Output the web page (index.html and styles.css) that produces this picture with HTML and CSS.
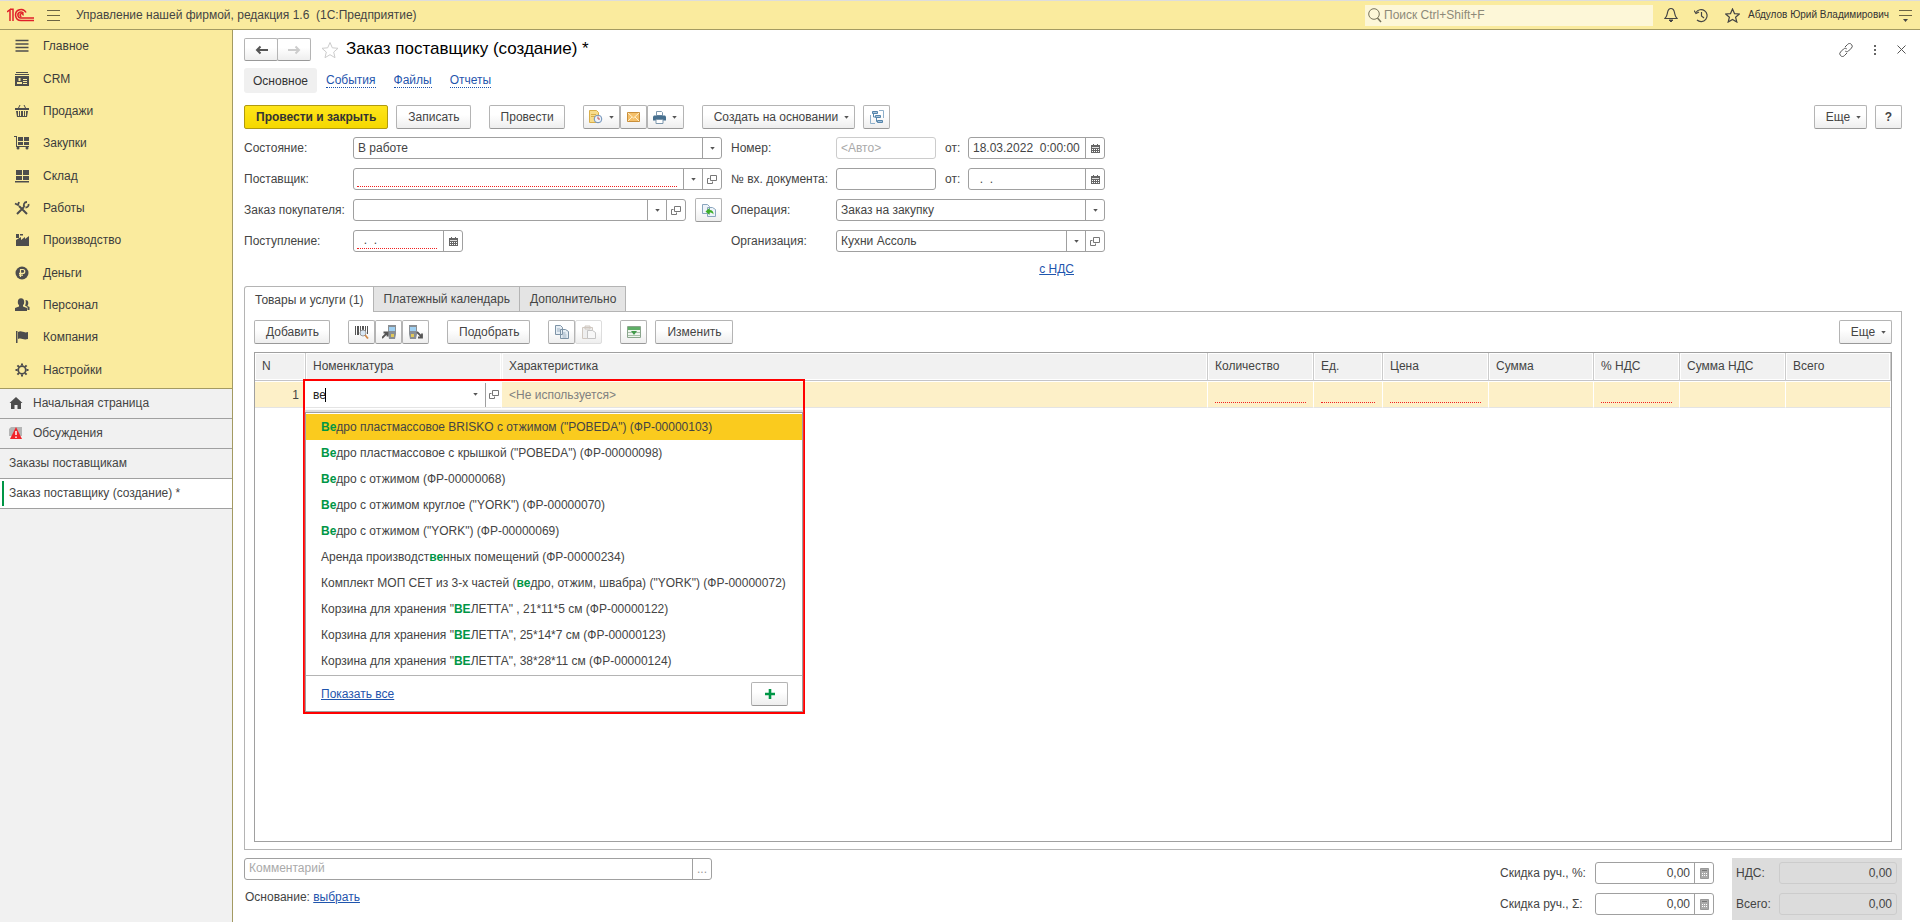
FILE: index.html
```html
<!DOCTYPE html>
<html lang="ru">
<head>
    <meta charset="UTF-8">
    <meta name="viewport" content="width=device-width, initial-scale=1.0">
    <title>Заказ поставщику (создание)</title>
    <link rel="stylesheet" href="styles.css">
</head>
<body>
    <svg class="sprite" width="0" height="0">
        <symbol id="i-caret" viewBox="0 0 6 4"><path d="M0 0h6L3 3.6z" fill="#555"/></symbol>
        <symbol id="i-open" viewBox="0 0 10 9"><path d="M3.5.5h6v5h-6zM2.5 3.5h-2v5h5v-2" fill="none" stroke="#777"/></symbol>
        <symbol id="i-cal" viewBox="0 0 9 9"><path d="M0 1h2V0h1v1h3V0h1v1h2v8H0z" fill="#666"/><path d="M1 3.5h7" stroke="#ddd"/><path d="M1 5.5h7M1 7.5h7" stroke="#fff" stroke-dasharray="1 1"/></symbol>
        <symbol id="i-calc" viewBox="0 0 9 11"><path d="M.5.5h8v10h-8z" fill="#aaa" stroke="#999"/><path d="M2 2.500h5" stroke="#777"/><path d="M2 5.500h5M2 7.500h5" stroke="#fff" stroke-dasharray="1 1"/></symbol>
    </svg>

    <header class="topbar">
        <svg class="logo" width="28" height="14" viewBox="0 0 28 14" fill="none" stroke="#e0202a" stroke-width="1.500">
            <path d="M0 4l3-2.300V13M3 1.200h3V13"/>
            <path d="M19 4.500A5.500 5.500 0 1 0 14 12.500h13"/>
            <path d="M16.500 5.500A3 3 0 1 0 14 10h13"/>
            <path d="M16 7.500a1.500 1.500 0 1 0-1.500 1"/>
        </svg>
        <button class="plain menu-btn" aria-label="Меню">
            <svg width="13" height="11" viewBox="0 0 13 11" stroke="#6b6444"><path d="M0 .5h13M0 5.500h13M0 10.500h13"/></svg>
        </button>
        <div class="app-title">Управление нашей фирмой, редакция 1.6&nbsp; (1С:Предприятие)</div>
        <label class="search">
            <svg width="14" height="15" viewBox="0 0 14 15" fill="none" stroke="#77735a"><circle cx="6" cy="6" r="5.300"/><path d="M9.500 10l3.500 4" stroke-width="1.500"/></svg>
            <input type="text" placeholder="Поиск Ctrl+Shift+F" aria-label="Поиск">
        </label>
        <div class="top-icons">
            <button class="plain" aria-label="Уведомления">
                <svg width="14" height="16" viewBox="0 0 14 16" fill="none" stroke="#444"><path d="M1 11.500c2-2 2-3 2.500-6C4 3 5.500 1.500 7 1.500S10 3 10.500 5.500c.5 3 .5 4 2.500 6z" stroke-width="1.200"/><path d="M5 13h4l-2 2z" fill="#444"/></svg>
            </button>
            <button class="plain" aria-label="История">
                <svg width="15" height="15" viewBox="0 0 15 15" fill="none" stroke="#444" stroke-width="1.200"><path d="M2 4.500A6 6 0 1 1 3 12"/><path d="M7.500 4v4l2.500 2"/><path d="M0 2.500l2 3 3-1.500" /></svg>
            </button>
            <button class="plain" aria-label="Избранное">
                <svg width="15" height="15" viewBox="0 0 15 15" fill="none" stroke="#444" stroke-width="1.200"><path d="M7.500 1l2 4.600 4.800.4-3.700 3.200L11.800 14l-4.300-2.600L3.200 14l1.200-4.800L.7 6l4.800-.4z"/></svg>
            </button>
        </div>
        <div class="user">Абдулов Юрий Владимирович</div>
        <button class="plain" aria-label="Сервис">
            <svg width="13" height="13" viewBox="0 0 13 13"><path d="M0 1.500h13M0 6.500h13" stroke="#6b6444"/><path d="M4 10h5l-2.500 3z" fill="#444"/></svg>
        </button>
    </header>

    <div class="workspace">
        <aside class="sidebar">
            <nav class="sections">
                <a href="#main"><svg width="16" height="16" viewBox="0 0 16 16" stroke="#4d4d4d" stroke-width="1.500"><path d="M1.500 2.500h13M1.500 6h13M1.500 9.500h13M1.500 13h13"/></svg>Главное</a>
                <a href="#crm"><svg width="16" height="16" viewBox="0 0 16 16" fill="#4d4d4d"><path d="M2 1h12v1H2zM1 3h14v1H1zM1 5h14v10H1z"/><path d="M4.500 7h2v3h-2zM3 11h5v2H3zM9 8h4v1H9zM9 10h4v1H9zM9 12h4v1H9z" fill="#faeb9e"/></svg>CRM</a>
                <a href="#sales"><svg width="16" height="16" viewBox="0 0 16 16" fill="#4d4d4d"><path d="M1 5h14v2H1zM2 8h12l-1 6H3z"/><path d="M4 6l2-4M12 6l-2-4" stroke="#4d4d4d"/><path d="M4.500 8v5M6.500 8v5M9.500 8v5M11.500 8v5" stroke="#faeb9e"/></svg>Продажи</a>
                <a href="#purchases"><svg width="16" height="16" viewBox="0 0 16 16" fill="#4d4d4d"><path d="M0 1h3v10h12v1H2V2H0z"/><path d="M4 2h5v4H4zM10 2h5v4h-5zM4 7h5v3H4zM10 7h5v3h-5z"/><circle cx="4" cy="13" r="1.500"/><circle cx="13" cy="13" r="1.500"/></svg>Закупки</a>
                <a href="#stock"><svg width="16" height="16" viewBox="0 0 16 16" fill="#4d4d4d"><path d="M2 2h6v5H2zM9 2h6v5H9zM2 8h6v4H2zM9 8h6v4H9zM1 13h14v1.500H1z"/></svg>Склад</a>
                <a href="#works"><svg width="16" height="16" viewBox="0 0 16 16" fill="none" stroke="#4d4d4d" stroke-width="2"><path d="M5 6l8 8M3 14l7-7"/><path d="M1 3.500l3 1.500 1-3M10.500 7C9 5 10 2 13 2M14.500 4c.5 2-1 3.500-3 3.500" stroke-width="1.800"/></svg>Работы</a>
                <a href="#production"><svg width="16" height="16" viewBox="0 0 16 16" fill="#4d4d4d"><path d="M2 14V8l5-3v3l4-3v2l4-3v10zM2 2h3v4H2zM6 2h3v1.500H6z"/></svg>Производство</a>
                <a href="#money"><svg width="16" height="16" viewBox="0 0 16 16"><circle cx="8" cy="8" r="6.500" fill="#4d4d4d"/><path d="M6.500 12V4.500h2.300a1.900 1.900 0 0 1 0 3.900H5M5 10.200h4" fill="none" stroke="#faeb9e" stroke-width="1.200"/></svg>Деньги</a>
                <a href="#staff"><svg width="16" height="16" viewBox="0 0 16 16" fill="#4d4d4d"><ellipse cx="7" cy="5" rx="3.200" ry="3.800"/><path d="M1 14v-3l4-1.500V7h4v2.500l4 1.500v3z"/><path d="M11.500 3c2 0 2.800 1 2.800 3s-1 2-.8 3l2 1v3h-2v-3l-2.500-1.500c1-2 1-3 .5-5.500z"/></svg>Персонал</a>
                <a href="#company"><svg width="16" height="16" viewBox="0 0 16 16" fill="#4d4d4d"><path d="M2 2h1.500v12H2zM4 3c4-2 5 1.500 10 0v7c-5 1.500-6-1.500-10 0z"/></svg>Компания</a>
                <a href="#settings"><svg width="16" height="16" viewBox="0 0 16 16" fill="none" stroke="#4d4d4d"><circle cx="8" cy="8" r="3.800" stroke-width="1.800"/><path d="M8 1.500v2M8 12.500v2M1.500 8h2M12.500 8h2M3.400 3.400l1.500 1.500M11.100 11.100l1.500 1.500M3.400 12.600l1.500-1.500M11.100 4.900l1.500-1.500" stroke-width="2"/></svg>Настройки</a>
            </nav>
            <nav class="windows">
                <a href="#home" class="with-icon"><svg width="14" height="14" viewBox="0 0 14 14" fill="#4d4d4d"><path d="M7 1l6.500 6H12v6H8.500V9h-3v4H2V7H.5z"/></svg>Начальная страница</a>
                <a href="#chat" class="with-icon"><svg width="14" height="14" viewBox="0 0 14 14"><path d="M2 1h11v9H0V3z" fill="#b5b5b5"/><path d="M7 1l6 12H1z" fill="#f0242a"/><path d="M7 5v4M7 10.500V12" stroke="#fff" stroke-width="1.500"/></svg>Обсуждения</a>
                <a href="#orders">Заказы поставщикам</a>
                <a href="#order" class="active">Заказ поставщику (создание) *</a>
            </nav>
        </aside>

        <main class="page">
            <div class="title-row">
                <div class="group">
                    <button class="btn" aria-label="Назад"><svg width="13" height="10" viewBox="0 0 13 10" fill="none" stroke="#555" stroke-width="2"><path d="M1.500 5H13M5.500 1.500L2 5l3.500 3.500"/></svg></button>
                    <button class="btn" aria-label="Вперед"><svg width="13" height="10" viewBox="0 0 13 10" fill="none" stroke="#ccc" stroke-width="2"><path d="M0 5h11.500M7.500 1.500L11 5 7.500 8.500"/></svg></button>
                </div>
                <button class="plain fav" aria-label="В избранное"><svg width="18" height="18" viewBox="0 0 18 18" fill="none" stroke="#ccc"><path d="M9 1.500l2.300 5.300 5.700.5-4.300 3.800 1.300 5.600L9 13.700l-5 3 1.300-5.600L1 7.300l5.700-.5z"/></svg></button>
                <h1>Заказ поставщику (создание) *</h1>
                <div class="title-icons">
                    <button class="plain" aria-label="Ссылка"><svg width="14" height="14" viewBox="0 0 14 14" fill="none" stroke="#555"><path d="M6 4l2.500-2.500a2.500 2.500 0 0 1 4 0 2.500 2.500 0 0 1 0 3.500L9.500 8C8.500 9 7 9 6.200 8M8 10l-2.500 2.500a2.500 2.500 0 0 1-4 0 2.500 2.500 0 0 1 0-3.500l3-3C5.500 5 7 5 7.800 6"/></svg></button>
                    <button class="plain" aria-label="Еще"><svg width="4" height="12" viewBox="0 0 4 12" fill="#666"><path d="M1 1h2v2H1zM1 5h2v2H1zM1 9h2v2H1z"/></svg></button>
                    <button class="plain" aria-label="Закрыть"><svg width="9" height="9" viewBox="0 0 9 9" stroke="#555"><path d="M.5.5l8 8M8.500.5l-8 8"/></svg></button>
                </div>
            </div>

            <nav class="links">
                <span class="current">Основное</span>
                <a href="#events">События</a>
                <a href="#files">Файлы</a>
                <a href="#reports">Отчеты</a>
            </nav>

            <div class="commands">
                <button class="btn primary">Провести и закрыть</button>
                <button class="btn btn-m">Записать</button>
                <button class="btn btn-m spaced">Провести</button>
                <div class="group spaced">
                    <button class="btn wide" aria-label="Напоминание"><svg width="15" height="14" viewBox="0 0 15 14"><path d="M1.500.5h7l2 2v10h-9z" fill="#f7dc8c" stroke="#d8ae4a"/><path d="M3 4.500h5M3 6.500h4" stroke="#d8ae4a"/><circle cx="10" cy="9" r="3.800" fill="#eef3fa" stroke="#6c8fb8"/><path d="M10 6.500V9h2" fill="none" stroke="#c05050"/></svg><svg class="caret" width="5" height="3"><use href="#i-caret"/></svg></button>
                    <button class="btn" aria-label="Письмо"><svg width="13" height="10" viewBox="0 0 13 10"><path d="M.5.5h12v9H.5z" fill="#f5c06a" stroke="#c98f3a"/><path d="M1 1l5.500 5L12 1M1 9l4-4M12 9L8 5" fill="none" stroke="#fff0cc"/></svg></button>
                    <button class="btn wide" aria-label="Печать"><svg width="13" height="13" viewBox="0 0 13 13"><path d="M3.500.5h5l1 1v3h-6z" fill="#fff" stroke="#7c97ad"/><path d="M1 4.500h11l1 1v4H0v-4z" fill="#47708f"/><path d="M3 8.500h7v4H3z" fill="#fff" stroke="#7c97ad"/></svg><svg class="caret" width="5" height="3"><use href="#i-caret"/></svg></button>
                </div>
                <button class="btn btn-m spaced drop">Создать на основании<svg class="caret" width="5" height="3"><use href="#i-caret"/></svg></button>
                <button class="btn" aria-label="Структура подчиненности"><svg width="14" height="14" viewBox="0 0 14 14"><path d="M2.500 1.500h5v2h-5zM5.500 5.500h5v2h-5zM7.500 10.500h5v2h-5z" fill="#a8c4dc" stroke="#5585ab"/><path d="M3.500 4v3h2M6.500 8v3.500h1" fill="none" stroke="#5585ab"/><path d="M9 .5h4.500V8M.5 5v8.500H5" fill="none" stroke="#8fb0cb"/></svg></button>
                <button class="btn drop more push">Еще<svg class="caret" width="5" height="3"><use href="#i-caret"/></svg></button>
                <button class="btn help">?</button>
            </div>

            <form class="details">
                <div class="col">
                    <div class="row">
                        <label for="state">Состояние:</label>
                        <div class="field grow">
                            <select id="state"><option>В работе</option></select>
                            <span class="side"><svg width="5" height="3"><use href="#i-caret"/></svg></span>
                        </div>
                    </div>
                    <div class="row">
                        <label for="supplier">Поставщик:</label>
                        <div class="field grow required">
                            <input id="supplier" type="text">
                            <button type="button" class="side" aria-label="Выбрать"><svg width="5" height="3"><use href="#i-caret"/></svg></button>
                            <button type="button" class="side" aria-label="Открыть"><svg width="10" height="9"><use href="#i-open"/></svg></button>
                        </div>
                    </div>
                    <div class="row">
                        <label for="buyer">Заказ покупателя:</label>
                        <div class="field grow">
                            <input id="buyer" type="text">
                            <button type="button" class="side" aria-label="Выбрать"><svg width="5" height="3"><use href="#i-caret"/></svg></button>
                            <button type="button" class="side" aria-label="Открыть"><svg width="10" height="9"><use href="#i-open"/></svg></button>
                        </div>
                        <button type="button" class="btn fill" aria-label="Заполнить"><svg width="14" height="13" viewBox="0 0 14 13"><path d="M.5.5h5l2 2v7h-7zM5.500 3.500h5l3 2v7h-8z" fill="#eef4fa" stroke="#8aa5bd"/><path d="M3.500 7.500l4-3.500v2c3 0 4 1.500 4 4.500-1-1.500-2-2-4-2v2.500z" fill="#3fae29"/></svg></button>
                    </div>
                    <div class="row">
                        <label for="receipt">Поступление:</label>
                        <div class="field short required">
                            <input id="receipt" type="text" value="  .  .">
                            <button type="button" class="side" aria-label="Календарь"><svg width="9" height="9"><use href="#i-cal"/></svg></button>
                        </div>
                    </div>
                </div>
                <div class="col right">
                    <div class="row">
                        <label for="number">Номер:</label>
                        <div class="field num off"><input id="number" type="text" placeholder="&lt;Авто&gt;"></div>
                        <label class="from" for="date">от:</label>
                        <div class="field grow">
                            <input id="date" type="text" value="18.03.2022  0:00:00">
                            <button type="button" class="side" aria-label="Календарь"><svg width="9" height="9"><use href="#i-cal"/></svg></button>
                        </div>
                    </div>
                    <div class="row">
                        <label for="innumber">№ вх. документа:</label>
                        <div class="field num"><input id="innumber" type="text"></div>
                        <label class="from" for="indate">от:</label>
                        <div class="field grow">
                            <input id="indate" type="text" value="  .  .">
                            <button type="button" class="side" aria-label="Календарь"><svg width="9" height="9"><use href="#i-cal"/></svg></button>
                        </div>
                    </div>
                    <div class="row">
                        <label for="operation">Операция:</label>
                        <div class="field grow">
                            <select id="operation"><option>Заказ на закупку</option></select>
                            <span class="side"><svg width="5" height="3"><use href="#i-caret"/></svg></span>
                        </div>
                    </div>
                    <div class="row">
                        <label for="org">Организация:</label>
                        <div class="field grow">
                            <input id="org" type="text" value="Кухни Ассоль">
                            <button type="button" class="side" aria-label="Выбрать"><svg width="5" height="3"><use href="#i-caret"/></svg></button>
                            <button type="button" class="side" aria-label="Открыть"><svg width="10" height="9"><use href="#i-open"/></svg></button>
                        </div>
                    </div>
                    <a class="vat" href="#vat">с НДС</a>
                </div>
            </form>

            <div class="tabs">
                <button class="tab active">Товары и услуги (1)</button>
                <button class="tab">Платежный календарь</button>
                <button class="tab">Дополнительно</button>
            </div>

            <section class="panel">
                <div class="commands">
                    <button class="btn btn-m">Добавить</button>
                    <div class="group spaced">
                        <button class="btn" aria-label="Поиск по штрихкоду"><svg width="14" height="14" viewBox="0 0 14 14"><path d="M0 1h1v9H0zM2 1h2v9H2zM5 1h1v8H5zM7 1h2v6H7zM10 1h1v9h-1zM12 1h1v8h-1z" fill="#555"/><circle cx="8" cy="8" r="3" fill="#d9e8f5" stroke="#999"/><path d="M10 10l3 3.500" stroke="#d08a4a" stroke-width="1.800"/></svg></button>
                        <button class="btn" aria-label="Загрузить из ТСД"><svg width="14" height="14" viewBox="0 0 14 14"><path d="M6 0h8v9l-1 5H7l-1-5z" fill="#8a8f94"/><path d="M7 2h6v4H7z" fill="#9fd0f2"/><path d="M9 9h3v3H9z" fill="#e0c85a"/><path d="M0 13l5-5M1.500 7.500H5.500V11.500" fill="none" stroke="#555" stroke-width="1.800"/></svg></button>
                        <button class="btn" aria-label="Выгрузить в ТСД"><svg width="14" height="14" viewBox="0 0 14 14"><path d="M0 0h8v9l-1 5H1L0 9z" fill="#8a8f94"/><path d="M1 2h6v4H1z" fill="#9fd0f2"/><path d="M2 9h3v3H2z" fill="#e0c85a"/><path d="M8 7l5 5M13 8.500v4H9" fill="none" stroke="#555" stroke-width="1.800"/></svg></button>
                    </div>
                    <button class="btn btn-m spaced">Подобрать</button>
                    <div class="group spaced">
                        <button class="btn" aria-label="Копировать"><svg width="14" height="14" viewBox="0 0 14 14"><path d="M.5.5h5l2 2v7h-7zM5.500 4.500h5l3 2v7h-8z" fill="#e6eef5" stroke="#7d93a6"/><path d="M2 4h3M2 6h3M7.500 8h3M7.500 10h4M7.500 12h4" stroke="#9db0c1"/></svg></button>
                        <button class="btn off" aria-label="Вставить"><svg width="14" height="14" viewBox="0 0 14 14"><path d="M.5 2.500h10v11H.5zM3 1h5v3H3z" fill="#eee" stroke="#d0c8c0"/><path d="M5.500 5.500h5l3 2v6h-8z" fill="#f7f7f7" stroke="#c4c4c4"/></svg></button>
                    </div>
                    <button class="btn spaced" aria-label="Заполнить"><svg width="14" height="12" viewBox="0 0 14 12"><path d="M.5.5h13v11H.5z" fill="#eef5ee" stroke="#8aa58c"/><path d="M1 1h12v3H1z" fill="#5fae66"/><path d="M1 6.500h12M1 9.500h12" stroke="#a9bfaa"/><path d="M4 5h6L7 9z" fill="#3f9a48"/></svg></button>
                    <button class="btn btn-m">Изменить</button>
                    <button class="btn drop more push">Еще<svg class="caret" width="5" height="3"><use href="#i-caret"/></svg></button>
                </div>

                <div class="grid">
                    <table>
                        <colgroup>
                            <col class="c-n"><col class="c-item"><col><col class="c-qty"><col class="c-unit"><col class="c-qty"><col class="c-sum"><col class="c-vat"><col class="c-qty"><col class="c-sum">
                        </colgroup>
                        <thead>
                            <tr><th>N</th><th>Номенклатура</th><th>Характеристика</th><th>Количество</th><th>Ед.</th><th>Цена</th><th>Сумма</th><th>% НДС</th><th>Сумма НДС</th><th>Всего</th></tr>
                        </thead>
                        <tbody>
                            <tr>
                                <td class="n">1</td>
                                <td class="edit">
                                    <div class="editor">
                                        <span class="entry"><input type="text" value="ве" aria-label="Номенклатура"><i class="cursor"></i></span>
                                        <button class="side" aria-label="Выбрать"><svg width="5" height="3"><use href="#i-caret"/></svg></button>
                                        <button class="side open" aria-label="Открыть"><svg width="10" height="9"><use href="#i-open"/></svg></button>
                                    </div>
                                    <div class="highlight">
                                        <div class="popup">
                                            <ul>
                                                <li class="selected"><b>Ве</b>дро пластмассовое BRISKO с отжимом ("POBEDA") (ФР-00000103)</li>
                                                <li><b>Ве</b>дро пластмассовое с крышкой ("POBEDA") (ФР-00000098)</li>
                                                <li><b>Ве</b>дро с отжимом (ФР-00000068)</li>
                                                <li><b>Ве</b>дро с отжимом круглое ("YORK") (ФР-00000070)</li>
                                                <li><b>Ве</b>дро с отжимом ("YORK") (ФР-00000069)</li>
                                                <li>Аренда производст<b>ве</b>нных помещений (ФР-00000234)</li>
                                                <li>Комплект МОП СЕТ из 3-х частей (<b>ве</b>дро, отжим, швабра) ("YORK") (ФР-00000072)</li>
                                                <li>Корзина для хранения "<b>ВЕ</b>ЛЕТТА" , 21*11*5 см (ФР-00000122)</li>
                                                <li>Корзина для хранения "<b>ВЕ</b>ЛЕТТА", 25*14*7 см (ФР-00000123)</li>
                                                <li>Корзина для хранения "<b>ВЕ</b>ЛЕТТА", 38*28*11 см (ФР-00000124)</li>
                                            </ul>
                                            <div class="popup-foot">
                                                <a href="#all">Показать все</a>
                                                <button class="btn" aria-label="Создать"><svg width="10" height="10" viewBox="0 0 10 10" stroke="#009646" stroke-width="2.600"><path d="M5 0v10M0 5h10"/></svg></button>
                                            </div>
                                        </div>
                                    </div>
                                </td>
                                <td class="muted">&lt;Не используется&gt;</td>
                                <td><i class="req"></i></td>
                                <td><i class="req"></i></td>
                                <td><i class="req"></i></td>
                                <td></td>
                                <td><i class="req"></i></td>
                                <td></td>
                                <td></td>
                            </tr>
                        </tbody>
                    </table>
                </div>
            </section>

            <footer class="bottom">
                <div class="notes">
                    <div class="field">
                        <input type="text" placeholder="Комментарий" aria-label="Комментарий">
                        <button class="side dots" aria-label="Открыть комментарий">...</button>
                    </div>
                    <div class="basis">Основание: <a href="#basis">выбрать</a></div>
                </div>
                <div class="sums">
                    <div class="row">
                        <label for="dp">Скидка руч., %:</label>
                        <div class="field grow"><input id="dp" type="text" value="0,00"><button class="side" aria-label="Калькулятор"><svg width="9" height="11"><use href="#i-calc"/></svg></button></div>
                    </div>
                    <div class="row">
                        <label for="ds">Скидка руч., Σ:</label>
                        <div class="field grow"><input id="ds" type="text" value="0,00"><button class="side" aria-label="Калькулятор"><svg width="9" height="11"><use href="#i-calc"/></svg></button></div>
                    </div>
                </div>
                <div class="sums totals">
                    <div class="row">
                        <label for="vat">НДС:</label>
                        <div class="field grow"><input id="vat" type="text" value="0,00" readonly></div>
                    </div>
                    <div class="row">
                        <label for="total">Всего:</label>
                        <div class="field grow"><input id="total" type="text" value="0,00" readonly></div>
                    </div>
                </div>
            </footer>
        </main>
    </div>
</body>
</html>
```
FILE: styles.css
```css
* {
    box-sizing: border-box;
}
body {
    margin: 0;
    height: 100vh;
    display: flex;
    flex-direction: column;
    font: 12px/16px "Liberation Sans", Arial, sans-serif;
    color: #444;
    background: #fff;
}
button, input, select {
    font: inherit;
    color: inherit;
    margin: 0;
}
svg {
    display: block;
    flex: none;
}
.sprite {
    position: absolute;
}
a {
    color: #1f55ad;
}
.plain {
    border: 0;
    padding: 0;
    background: none;
}

/* top bar */
.topbar {
    height: 30px;
    flex: none;
    display: flex;
    align-items: center;
    padding: 0 8px 0 7px;
    background: #faeb9e;
    border-top: 1px solid #ddd;
    border-bottom: 1px solid #a39a62;
}
.menu-btn {
    margin: 0 16px 0 12px;
}
.app-title {
    white-space: nowrap;
}
.search {
    display: flex;
    align-items: center;
    gap: 2px;
    width: 288px;
    height: 21px;
    margin-left: auto;
    padding-left: 3px;
    background: #fdf7d8;
}
.search input {
    flex: 1;
    min-width: 0;
    border: 0;
    padding: 0;
    background: none;
    outline: none;
}
.search input::placeholder {
    color: #8d8a78;
}
.top-icons {
    display: flex;
    gap: 16px;
    padding: 0 8px 0 11px;
}
.user {
    font-size: 10px;
    margin-right: 10px;
    color: #333;
    white-space: nowrap;
}

/* left side */
.workspace {
    flex: 1;
    display: flex;
    min-height: 0;
}
.sidebar {
    width: 233px;
    flex: none;
    background: #f1f1f1;
    border-right: 1px solid #a39a62;
}
.sections {
    display: grid;
    grid-auto-rows: 1fr;
    height: 359px;
    padding-bottom: 2px;
    background: #faeb9e;
    border-bottom: 1px solid #a39a62;
}
.sections a {
    display: flex;
    align-items: center;
    gap: 13px;
    padding-left: 14px;
    color: #3c3c3c;
    text-decoration: none;
}
.windows a {
    display: flex;
    align-items: center;
    height: 30px;
    padding: 0 0 1px 9px;
    border-bottom: 1px solid #a0a0a0;
    color: #444;
    text-decoration: none;
}
.windows .with-icon {
    gap: 10px;
}
.windows .active {
    padding-left: 5px;
    background: #fff;
}
.windows .active::before {
    content: "";
    width: 2px;
    height: 25px;
    margin: 0 5px 0 -3px;
    background: #009646;
}

/* document page */
.page {
    flex: 1;
    min-width: 0;
    display: flex;
    flex-direction: column;
    padding: 8px 18px 2px 11px;
}
.title-row {
    display: flex;
    align-items: center;
    height: 23px;
}
.fav {
    margin: 0 7px 0 10px;
}
h1 {
    margin: 0;
    padding-bottom: 2px;
    font-size: 17px;
    font-weight: normal;
    line-height: 20px;
    color: #000;
}
.title-icons {
    display: flex;
    align-items: center;
    gap: 20px;
    margin: 0 -4px 0 auto;
}
.group {
    display: flex;
}
.btn {
    display: flex;
    align-items: center;
    justify-content: center;
    min-width: 27px;
    height: 24px;
    padding: 0;
    border: 1px solid #b4b4b4;
    border-bottom-color: #999;
    border-radius: 2px;
    background: linear-gradient(#fff 40%, #eee);
    white-space: nowrap;
}
.title-row .btn {
    width: 34px;
    height: 23px;
}
.title-row .btn + .btn {
    margin-left: -1px;
}
.btn-m {
    padding: 0 10px 0 11px;
}
.btn.wide {
    width: 37px;
    gap: 6px;
}
.btn.primary {
    padding: 0 11px;
    font-weight: bold;
    color: #333;
    border-color: #b09a10;
    background: linear-gradient(#ffe51a, #f5d800);
}
.btn.off {
    border-color: #ddd;
}
.btn.drop {
    gap: 6px;
}
.btn.drop.btn-m {
    padding-right: 5px;
}
.btn.more {
    width: 53px;
    padding-left: 6px;
}
.btn.help {
    font-weight: bold;
}
.push {
    margin-left: auto;
}
.links {
    display: flex;
    align-items: center;
    gap: 18px;
    height: 25px;
    margin: 7px 0 12px;
}
.links .current {
    padding: 5px 9px 4px;
    margin-right: -9px;
    background: #f0f0f0;
    border-radius: 3px;
    color: #333;
}
.links a {
    line-height: 14px;
    text-decoration: none;
    border-bottom: 1px dotted #1f55ad;
}
.commands {
    display: flex;
    gap: 8px;
}
.commands .spaced {
    margin-left: 10px;
}

/* fields */
.details {
    display: flex;
    gap: 9px;
    margin-top: 8px;
}
.col {
    display: flex;
    flex-direction: column;
    gap: 9px;
    width: 478px;
}
.col.right {
    width: 374px;
}
.row {
    display: flex;
    align-items: center;
    height: 22px;
}
.row label {
    width: 109px;
    flex: none;
    white-space: nowrap;
}
.right .row label {
    width: 105px;
}
.right .row .from {
    width: 32px;
    padding-left: 9px;
}
.field {
    display: flex;
    height: 22px;
    border: 1px solid #a0a0a0;
    border-radius: 3px;
    background: #fff;
}
.grow {
    flex: 1;
}
.short {
    width: 110px;
}
.num {
    width: 100px;
}
.field.off {
    border-color: #ccc;
}
.field input, .field select {
    flex: 1;
    width: 0;
    min-width: 0;
    border: 0;
    padding: 0 4px;
    background: none;
    outline: none;
    appearance: none;
}
.field input::placeholder {
    color: #aaa;
}
.field.required input {
    margin: 0 6px 2px 3px;
    padding: 0;
    border-bottom: 1px dotted #f02020;
}
.side {
    display: flex;
    align-items: center;
    justify-content: center;
    width: 19px;
    flex: none;
    padding: 0;
    border: 0;
    border-left: 1px solid #a0a0a0;
    background: none;
}
.btn.fill {
    margin-left: 9px;
}
.vat {
    align-self: flex-end;
    margin-right: 31px;
}

/* tabs */
.tabs {
    display: flex;
    margin-top: 9px;
}
.tab {
    height: 25px;
    margin-left: -1px;
    padding: 0 9px 0 10px;
    border: 1px solid #b4b4b4;
    border-bottom: 0;
    background: #e4e4e4;
}
.tab.active {
    height: 26px;
    margin: 0 0 -1px;
    border-radius: 3px 0 0 0;
    background: #fff;
    z-index: 1;
}
.panel {
    flex: 1;
    display: flex;
    flex-direction: column;
    padding: 8px 9px 7px;
    border: 1px solid #b4b4b4;
}
.grid {
    flex: 1;
    margin-top: 8px;
    border: 1px solid #a0a0a0;
}
table {
    width: 100%;
    table-layout: fixed;
    border-collapse: separate;
    border-spacing: 0;
}
.c-n {
    width: 51px;
}
.c-item {
    width: 196px;
}
.c-qty {
    width: 106px;
}
.c-sum {
    width: 105px;
}
.c-unit {
    width: 69px;
}
.c-vat {
    width: 86px;
}
th {
    height: 28px;
    padding: 0 7px 2px;
    text-align: left;
    font-weight: normal;
    background: #f1f1f1;
    border-right: 1px solid #ccc;
    border-bottom: 1px solid #c4c4c8;
    box-shadow: inset 0 0 0 1px #fff;
}
th:nth-child(2) {
    border-right-color: #f1f1f1;
}
td {
    height: 27px;
    padding: 0 7px;
    background: #fdf0c8;
    border-right: 1px solid #fff;
    border-top: 1px solid #fff;
    border-bottom: 1px solid #e4e4e4;
}
td.n {
    text-align: right;
    padding-right: 6px;
}
td.muted {
    color: #808080;
}
.req {
    display: block;
    height: 16px;
    border-bottom: 1px dotted #f02020;
}
td.edit {
    position: relative;
    padding: 0;
    background: #fff;
}
.editor {
    display: flex;
    height: 24px;
}
.editor .side:nth-child(2) {
    border-left: 0;
}
.editor .open {
    width: 16px;
}
.entry {
    flex: 1;
    display: flex;
    align-items: center;
    padding-left: 7px;
}
.entry input {
    width: 12px;
    padding: 0;
    border: 0;
    outline: none;
    background: none;
    color: #222;
}
.cursor {
    width: 1px;
    height: 14px;
    background: #000;
}

/* suggestions */
.highlight {
    position: absolute;
    top: -3px;
    left: -3px;
    z-index: 2;
    width: 502px;
    padding-top: 31px;
    border: 2px solid #f00;
    pointer-events: none;
}
.popup {
    border: 1px solid #a0a0a0;
    background: #fff;
    box-shadow: 0 -2px 1px #ddd;
    pointer-events: auto;
}
.popup ul {
    margin: 0;
    padding: 1px 0;
    list-style: none;
}
.popup li {
    height: 26px;
    padding: 0 15px;
    line-height: 26px;
    white-space: nowrap;
}
.popup li b {
    color: #009646;
}
.popup .selected {
    background: #facb1e;
}
.popup-foot {
    display: flex;
    align-items: center;
    justify-content: space-between;
    height: 36px;
    padding: 0 14px 0 15px;
    border-top: 1px solid #b4b4b4;
}
.popup-foot .btn {
    width: 37px;
}

/* footer */
.bottom {
    display: flex;
    margin-top: 8px;
}
.notes {
    width: 468px;
}
.notes input {
    padding-bottom: 2px;
}
.notes .dots {
    color: #999;
}
.basis {
    margin: 9px 0 0 1px;
}
.sums {
    display: flex;
    flex-direction: column;
    gap: 9px;
    width: 214px;
    margin-left: auto;
    padding-top: 4px;
}
.sums .row label {
    width: 95px;
}
.sums input {
    text-align: right;
}
.totals {
    width: 170px;
    height: 62px;
    margin-left: 18px;
    padding: 4px 5px 4px 4px;
    background: #dcdcdc;
}
.totals .row label {
    width: 43px;
}
.totals .field {
    background: none;
    border-color: #ccc;
}
```
